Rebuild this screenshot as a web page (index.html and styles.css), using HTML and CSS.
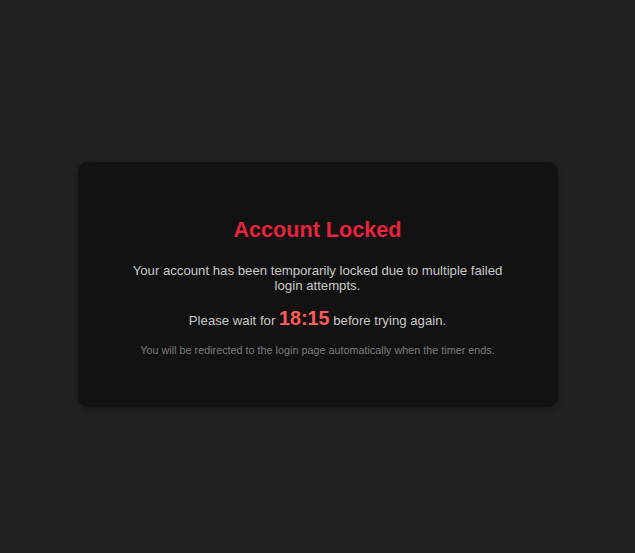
FILE: index.html
```html
<!DOCTYPE html>
<html lang="en">
<head>
<meta charset="utf-8">
<title>Account Locked</title>
<link rel="stylesheet" href="styles.css">
</head>
<body class="page">
  <main class="card">
    <h1 class="title">Account Locked</h1>
    <p class="message">Your account has been temporarily locked due to multiple failed login attempts.</p>
    <p class="message">Please wait for <span class="timer">18:15</span> before trying again.</p>
    <p class="note">You will be redirected to the login page automatically when the timer ends.</p>
  </main>
</body>
</html>
```

FILE: styles.css
```css
html { background: #222224; }
.page {
  margin: 8px;
  height: 100vh;
  display: flex;
  align-items: center;
  justify-content: center;
  font-family: "Liberation Sans", Arial, sans-serif;
  background: #222224;
}
.card {
  box-sizing: border-box;
  width: 480px;
  padding: 40px;
  background: #121212;
  border-radius: 10px;
  box-shadow: 0 2px 8px rgba(0,0,0,0.3);
  text-align: center;
}
.title {
  margin: 15px 0 20px;
  font-size: 21.6px;
  font-weight: bold;
  color: #e8223f;
}
.message {
  margin: 14px 0;
  font-size: 13.2px;
  color: #c8c8c8;
}
.timer {
  font-size: 19.8px;
  font-weight: bold;
  color: #ff5a5a;
}
.note {
  margin: 14px 0 11px;
  font-size: 10.8px;
  color: #7a7a7a;
}
```
